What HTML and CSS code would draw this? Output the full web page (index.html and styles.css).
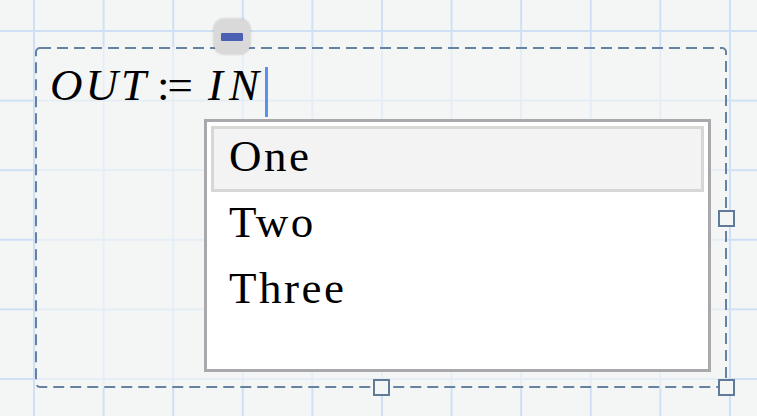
FILE: index.html
```html
<!DOCTYPE html>
<html lang="en">

<head>
    <meta charset="UTF-8">
    <title>Definition Region</title>
    <link rel="stylesheet" href="styles.css">
</head>

<body>
    <div class="region">
        <svg class="frame" width="692" height="341" viewBox="0 0 692 341">
            <rect x="1" y="1" width="690" height="339" rx="4" />
        </svg>
        <div class="collapse"><span class="bar"></span></div>
        <div class="expr">
            <span class="var">OUT</span><span class="def">:=</span><span class="var wide">IN</span><span class="cursor"></span>
        </div>
        <ul class="menu">
            <li class="active">One</li>
            <li>Two</li>
            <li>Three</li>
        </ul>
        <span class="handle right"></span>
        <span class="handle bottom"></span>
        <span class="handle corner"></span>
    </div>
</body>

</html>
```

FILE: styles.css
```css
body {
    margin: 0;
    height: 416px;
    overflow: hidden;
    background-color: #f4f6f5;
    background-image:
        linear-gradient(to right, #cfe0f6 2px, transparent 2px),
        linear-gradient(to bottom, #cfe0f6 2px, transparent 2px);
    background-size: 69.6px 69.6px;
    background-position: 33px 30px;
    font-family: "Liberation Serif", "Times New Roman", serif;
    color: #000;
}

.region {
    position: relative;
    margin: 47px 0 0 35px;
    width: 692px;
    height: 341px;
    /* fades the grid inside the region */
    background: rgba(244, 246, 245, 0.6);
    border-radius: 4px;
}

.frame {
    position: absolute;
    left: 0;
    top: 0;
}

.frame rect {
    fill: none;
    stroke: #6582a0;
    stroke-width: 2;
    stroke-dasharray: 11 6;
}

/* collapse toggle above the region */
.collapse {
    position: absolute;
    left: 179px;
    top: -28px;
    width: 36px;
    height: 35px;
    border-radius: 10px;
    background: #d9d9d9;
    box-shadow: 0 0 3px rgba(0, 0, 0, 0.25);
    display: flex;
    align-items: center;
    justify-content: center;
}

.collapse .bar {
    width: 22px;
    height: 8px;
    background: #4b5fb3;
    border-radius: 1px;
}

.expr {
    padding: 13px 0 0 15px;
    font-size: 45px;
    line-height: 50px;
    white-space: nowrap;
}

.var {
    font-style: italic;
    letter-spacing: 3px;
}

.var.wide {
    letter-spacing: 6px;
}

.def {
    margin: 0 17px 0 8px;
    letter-spacing: -2px;
}

.cursor {
    display: inline-block;
    width: 3px;
    height: 50px;
    margin-left: 0;
    background: #5b8ff0;
    vertical-align: -17px;
}

/* autocomplete list */
.menu {
    position: absolute;
    left: 169px;
    top: 72px;
    width: 507px;
    height: 253px;
    box-sizing: border-box;
    margin: 0;
    padding: 4px;
    list-style: none;
    background: #fff;
    border: 3px solid #a9a9ad;
}

.menu li {
    height: 66px;
    box-sizing: border-box;
    border: 3px solid transparent;
    padding: 0 15px 5px;
    font-size: 45px;
    line-height: 55px;
    letter-spacing: 2.5px;
}

.menu li.active {
    background: #f3f3f4;
    border-color: #d7d7d7;
}

.handle {
    position: absolute;
    width: 17px;
    height: 17px;
    box-sizing: border-box;
    border: 2px solid #5f7b98;
    background: #f4f6f5;
}

.handle.right {
    right: -8px;
    top: calc(50% - 8px);
}

.handle.bottom {
    bottom: -8px;
    left: calc(50% - 8px);
}

.handle.corner {
    right: -8px;
    bottom: -8px;
}
```
